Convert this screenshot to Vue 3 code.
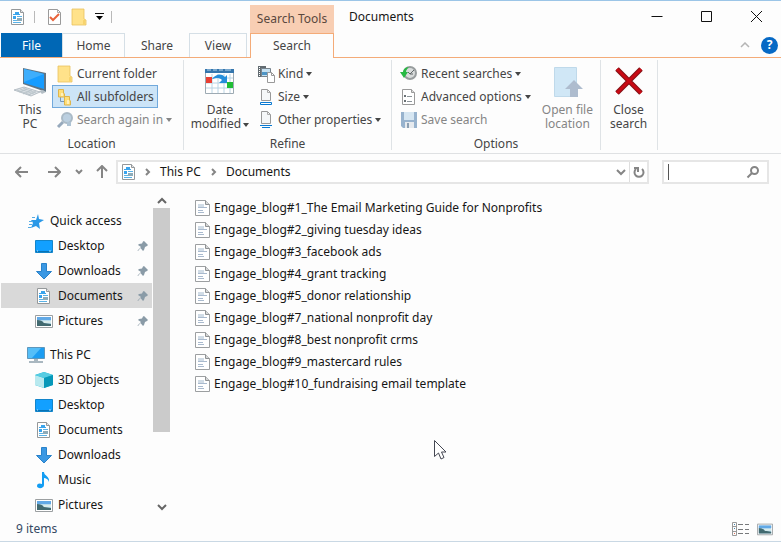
<script setup>
import { ref } from 'vue'

const query = ref('')
const tabs = [
  { name: 'Home', cls: 'home' },
  { name: 'Share', cls: 'share' },
  { name: 'View', cls: 'view' },
  { name: 'Search', cls: 'search' }
]
const tree = [
  {
    name: 'Quick access', icon: 'star', pinned: true,
    items: [
      { name: 'Desktop', icon: 'desktop' },
      { name: 'Downloads', icon: 'download' },
      { name: 'Documents', icon: 'document', selected: true },
      { name: 'Pictures', icon: 'picture' }
    ]
  },
  {
    name: 'This PC', icon: 'monitor', pinned: false,
    items: [
      { name: '3D Objects', icon: 'cube' },
      { name: 'Desktop', icon: 'desktop' },
      { name: 'Documents', icon: 'document' },
      { name: 'Downloads', icon: 'download' },
      { name: 'Music', icon: 'music' },
      { name: 'Pictures', icon: 'picture' }
    ]
  }
]
const files = [
  'Engage_blog#1_The Email Marketing Guide for Nonprofits',
  'Engage_blog#2_giving tuesday ideas',
  'Engage_blog#3_facebook ads',
  'Engage_blog#4_grant tracking',
  'Engage_blog#5_donor relationship',
  'Engage_blog#7_national nonprofit day',
  'Engage_blog#8_best nonprofit crms',
  'Engage_blog#9_mastercard rules',
  'Engage_blog#10_fundraising email template'
]
</script>

<template>
  <svg class="sprite" aria-hidden="true">
    <symbol id="document" viewBox="0 0 18 18">
      <path d="M2.500 1.500h9l3 3v12h-12z" fill="#fff" stroke="#94989a" />
      <path d="M11.500 1.500v3h3" fill="#e2e4e5" stroke="#94989a" />
      <path d="M6 4h4v2H6zM4 6h7v1H4zM4 8h3v3H4z" fill="#3aa4ec" />
      <path d="M8 8h5v1H8zM4 12h5v1H4zM4 14h8v1H4z" fill="#5ab2e6" />
      <path d="M8 10h5v3H8z" fill="#8dabb8" />
    </symbol>
    <symbol id="check" viewBox="0 0 18 18">
      <path d="M3.500 1.500h9l3 3v12h-12z" fill="#fff" stroke="#9a9a9a" />
      <path d="M12.500 1.500v3h3" fill="none" stroke="#aaa" />
      <path d="m5 9 3 3 6-6" fill="none" stroke="#e8643c" stroke-width="2" />
    </symbol>
    <symbol id="folder" viewBox="0 0 18 18">
      <path d="M2 1h12v10l2 1v5H2z" fill="#ffe28a" />
      <path d="M2 1h12v10l2 1v5H2z" fill="none" stroke="#e9c25d" stroke-width=".8" />
      <path d="M13 12.500 15 11v5l-2 1z" fill="#f7d36c" />
    </symbol>
    <symbol id="subfolders" viewBox="0 0 18 18">
      <path d="M4.500 8v5.500H8" fill="none" stroke="#7898b8" />
      <path d="M2.500 1.500h5V5l1 1v3h-6zM8.500 8.500h5V12l1 1v4h-6z" fill="#ffdf79" stroke="#dfb54c" />
      <path d="M5 5h2v3H5M11 12h2v4h-2" fill="#fff0bb" />
    </symbol>
    <symbol id="search-again" viewBox="0 0 18 18">
      <path d="m7 11-5 5" stroke="#8ca1b6" stroke-width="3" />
      <circle cx="11" cy="7" r="5" fill="#b4cbdd" stroke="#a2b3c1" stroke-width="2" />
      <path d="M11 11h4v4h-4" fill="#a6bdd0" />
    </symbol>
    <symbol id="workstation" viewBox="0 0 34 34">
      <path d="m10 4 23 5v19l-23-8z" fill="#5f7484" />
      <path d="m11 5 20 5v15l-20-6z" fill="#169cff" />
      <path d="m11 5 20 5-20 8z" fill="#3eaefc" />
      <path d="m26 27 4-1 3 2-4 2z" fill="#b4bec5" />
      <path d="m1 26 10-3 16 5-9 4z" fill="#dce1e5" stroke="#a9b4bb" stroke-width=".8" />
      <path d="m4 26 14 5M7 25l14 5M10 24l13 5M6 28l8-3m-4 5 9-4m-4 5 8-4" stroke="#b5c0c7" stroke-width=".8" />
    </symbol>
    <symbol id="calendar" viewBox="0 0 34 34">
      <path d="M2.500 5.500h28v24h-28z" fill="#fff" stroke="#9daab3" />
      <path d="M2 5h29v4H2z" fill="#3576ad" />
      <path d="M4 6h4m2 0h4m2 0h4m2 0h6" stroke="#b9d7ed" />
      <path d="M9 10v19M15 10v19M21 10v19M27 10v19M3 14h27M3 19h27M3 24h27" stroke="#b9d4e4" />
      <path d="M3 13h6v6H3z" fill="#e93f32" />
      <path d="M24 18h6v6h-6z" fill="#20bd35" />
      <path d="M9 15c4-5 9-6 13-2l2-2v8h-8l3-3c-3-3-6-2-10-1z" fill="#258edb" />
    </symbol>
    <symbol id="kind" viewBox="0 0 18 18">
      <path d="M1 1h8v11H1z" fill="#626b71" />
      <path d="M2 2h1v1H2zM2 4h1v1H2zM2 6h1v1H2zM2 8h1v1H2zM2 10h1v1H2z" fill="#fff" />
      <path d="M4.500 3.500h9v8h-9z" fill="#c6e1f1" stroke="#77838c" />
      <path d="M5 7h8v3H5z" fill="#4d95c6" />
      <path d="M10.500 7.500h4l3 3v7h-7z" fill="#fff" stroke="#999" />
      <path d="M14.500 7.500v3h3" fill="none" stroke="#999" />
    </symbol>
    <symbol id="size" viewBox="0 0 18 18">
      <path d="M4.500 1.500h6l3 3v8h-9z" fill="#f5f7f8" stroke="#999" />
      <path d="M10.500 1.500v3h3" fill="none" stroke="#aaa" />
      <path d="M3.500 14.500h11v2h-11z" fill="#fff" stroke="#0879d2" />
    </symbol>
    <symbol id="properties" viewBox="0 0 18 18">
      <path d="M4.500.500h6l3 3v9h-9z" fill="#f5f7f8" stroke="#999" />
      <path d="M10.500.500v3h3" fill="none" stroke="#aaa" />
      <path d="M3 14.500h12M5 16.500h8" stroke="#0879d2" />
    </symbol>
    <symbol id="recent" viewBox="0 0 18 18">
      <circle cx="10" cy="8" r="6" fill="#d8dbdb" stroke="#989d9e" stroke-width="2" />
      <path d="m8 7 2 2 4-4M10 9h3" fill="none" stroke="#606769" />
      <path d="M9 2C5 2 3 5 3 7H0l4 6 4-6H6c0-2 1-3 3-5z" fill="#28b944" />
    </symbol>
    <symbol id="advanced" viewBox="0 0 18 18">
      <path d="M2.500 1.500h9l3 3v12h-12z" fill="#fff" stroke="#9a9a9a" />
      <path d="M11.500 1.500v3h3" fill="#ddd" stroke="#9a9a9a" />
      <path d="M4 7h2v2H4zM4 12h2v2H4z" fill="#6b7276" />
      <path d="M7 8.500h5M7 13.500h5" stroke="#8c9499" />
    </symbol>
    <symbol id="save" viewBox="0 0 18 18">
      <path d="M1 1h16v16H3l-2-2z" fill="#8eabc9" />
      <path d="M4 1h10v8H4z" fill="#d2e4f1" /><path d="M5 11h9v6H5z" fill="#e4e9ed" />
      <path d="M7 12h2v5H7z" fill="#8095aa" />
    </symbol>
    <symbol id="location" viewBox="0 0 34 34">
      <path d="M4.500 3.500h22v29h-22z" fill="#cce5f6" stroke="#b9d6e8" />
      <path d="m24 16 9 9h-5v8h-8v-8h-5z" fill="#a6b5ca" />
    </symbol>
    <symbol id="close-search" viewBox="0 0 34 34">
      <path d="m5 5 24 24M29 5 5 29" stroke="#831116" stroke-width="5" />
      <path d="m5 5 24 24M29 5 5 29" stroke="#c90a14" stroke-width="3" />
    </symbol>
    <symbol id="star" viewBox="0 0 18 18">
      <path d="m11 2 1 5 5 1-5 3 1 6-4-3-5 2 2-5-2-3h5z" fill="#2998e7" />
      <path d="M5 5.500h3M2 9.500h4M2 12.500h3M1 15.500h3" stroke="#54aae3" />
    </symbol>
    <symbol id="desktop" viewBox="0 0 18 18">
      <path d="M.500 3.500h17v12H.500z" fill="#12a0ff" stroke="#1285cb" />
      <path d="M1 14h16v1H1z" fill="#0872b4" /><path d="M2 14h1m11 0h2" stroke="#bfe5fb" />
    </symbol>
    <symbol id="download" viewBox="0 0 18 18">
      <path d="M6.500 1.500h5v8h5L9 17 1.500 9.500h5z" fill="#3b98e3" stroke="#2982ca" />
    </symbol>
    <symbol id="picture" viewBox="0 0 18 18">
      <path d="M.500 3.500h17v12H.500z" fill="#fff" stroke="#9b9fa1" />
      <path d="M2 5h14v9H2z" fill="#b9dcef" /><path d="M2 5h14v3H2z" fill="#62a9e6" />
      <path d="M2 8q5 0 7 3l7 1v2H2z" fill="#426a70" /><path d="M8 9h8v2H9z" fill="#d9eceb" />
    </symbol>
    <symbol id="monitor" viewBox="0 0 18 18">
      <path d="M.500 1.500h17v11H.500z" fill="#1c9df2" stroke="#5d97bc" />
      <path d="M1 2h13L5 12H1z" fill="#55bef8" />
      <path d="M7 13h4v2h5v2H2v-2h5z" fill="#a9b7c0" />
    </symbol>
    <symbol id="cube" viewBox="0 0 18 18">
      <path d="m9 1 9 3v10l-9 3-9-3V4z" fill="#14b8d5" /><path d="m0 4 9 3v10l-9-3z" fill="#b8e9ef" />
      <path d="m0 4 9-3 9 3-9 3z" fill="#57cce2" /><path d="m9 7 9-3v10l-9 3z" fill="#0798b9" />
    </symbol>
    <symbol id="music" viewBox="0 0 18 18">
      <path d="M7 1h2c0 4 6 4 5 10-1-3-3-4-5-4v7c0 4-7 4-7 1 0-3 3-3 5-2z" fill="#139df3" />
    </symbol>
    <symbol id="pin" viewBox="0 0 12 12">
      <path d="m7 1 4 4-1 1-2 1-1 3-1 1-2.500-3L1 11l-.500-.500L4 7 1 5l1-1 3-.500 1-2z" fill="#8a9ba7" />
    </symbol>
    <symbol id="file" viewBox="0 0 16 18">
      <path d="M.500 1.500h10l4 4v11H.500z" fill="#fff" stroke="#9c9fa1" />
      <path d="M10.500 1.500v4h4" fill="#d5d7d8" stroke="#8f9294" />
      <path d="M3 5h6v3H3z" fill="#d1dce6" />
      <path d="M3 8.500h9M3 11.500h5M3 13.500h6" stroke="#a9bace" />
    </symbol>
    <symbol id="details" viewBox="0 0 18 16">
      <path d="M.500 1.500h4v13h-4zM.500 5.500h4M.500 10.500h4" fill="none" stroke="#999" />
      <path d="M6 3.500h5m2 0h4M6 8.500h5m2 0h4M6 12.500h5m2 0h4" stroke="#77797b" />
      <path d="M2 3h1v1H2zM2 7h1v1H2z" fill="#4486af" /><path d="M2 12h1v1H2z" fill="#df7359" />
    </symbol>
  </svg>

  <div class="window">
    <header class="titlebar">
      <div class="quick-tools">
        <svg class="icon"><use href="#document" /></svg>
        <span class="tool-rule"></span>
        <button aria-label="Properties"><svg class="icon"><use href="#check" /></svg></button>
        <button aria-label="New folder"><svg class="icon"><use href="#folder" /></svg></button>
        <button class="customize" aria-label="Customize toolbar"><svg viewBox="0 0 9 8"><path d="M0 .500h9" stroke="#111" /><path d="M1 3h7L4.500 7z" /></svg></button>
        <span class="tool-rule"></span>
      </div>
      <div class="context-title">Search Tools</div>
      <h1>Documents</h1>
      <div class="window-buttons">
        <button aria-label="Minimize"><svg viewBox="0 0 12 12"><path d="M.500 5.500h11" /></svg></button>
        <button aria-label="Maximize"><svg viewBox="0 0 12 12"><path d="M.500.500h10v10H.500z" /></svg></button>
        <button aria-label="Close"><svg viewBox="0 0 12 12"><path d="m0 0 11 11M11 0 0 11" /></svg></button>
      </div>
    </header>

    <nav class="tabs" aria-label="Ribbon">
      <button class="tab file-tab">File</button>
      <button v-for="tab in tabs" :key="tab.name" class="tab" :class="tab.cls">{{ tab.name }}</button>
      <div class="tab-tools">
        <button aria-label="Collapse ribbon"><svg viewBox="0 0 10 6"><path d="m1 5 4-4 4 4" fill="none" stroke="#b5b5b5" stroke-width="1.500" /></svg></button>
        <button class="help" aria-label="Help">?</button>
      </div>
    </nav>

    <section class="ribbon" aria-label="Search commands">
      <div class="group location-group">
        <div class="commands">
          <button class="large"><svg><use href="#workstation" /></svg><span>This<br>PC</span></button>
          <div class="small-list">
            <button><svg class="icon"><use href="#folder" /></svg>Current folder</button>
            <button class="chosen"><svg class="icon"><use href="#subfolders" /></svg>All subfolders</button>
            <button class="muted"><svg class="icon"><use href="#search-again" /></svg>Search again in<i class="arrow"></i></button>
          </div>
        </div>
        <div class="group-name">Location</div>
      </div>
      <div class="group refine-group">
        <div class="commands">
          <button class="large"><svg><use href="#calendar" /></svg><span>Date<br>modified<i class="arrow"></i></span></button>
          <div class="small-list">
            <button><svg class="icon"><use href="#kind" /></svg>Kind<i class="arrow"></i></button>
            <button><svg class="icon"><use href="#size" /></svg>Size<i class="arrow"></i></button>
            <button><svg class="icon"><use href="#properties" /></svg>Other properties<i class="arrow"></i></button>
          </div>
        </div>
        <div class="group-name">Refine</div>
      </div>
      <div class="group options-group">
        <div class="commands">
          <div class="small-list">
            <button><svg class="icon"><use href="#recent" /></svg>Recent searches<i class="arrow"></i></button>
            <button><svg class="icon"><use href="#advanced" /></svg>Advanced options<i class="arrow"></i></button>
            <button class="muted"><svg class="icon"><use href="#save" /></svg>Save search</button>
          </div>
          <button class="large muted"><svg><use href="#location" /></svg><span>Open file<br>location</span></button>
        </div>
        <div class="group-name">Options</div>
      </div>
      <div class="group close-group">
        <button class="large"><svg><use href="#close-search" /></svg><span>Close<br>search</span></button>
      </div>
    </section>

    <div class="navigation">
      <div class="history">
        <button class="back" aria-label="Back"><svg viewBox="0 0 14 14"><path d="M13 7H1m5-5L1 7l5 5" /></svg></button>
        <button aria-label="Forward"><svg viewBox="0 0 14 14"><path d="M1 7h12M8 2l5 5-5 5" /></svg></button>
        <button aria-label="Recent locations"><svg viewBox="0 0 14 14"><path d="m5 5 3 3 3-3" /></svg></button>
        <button aria-label="Up"><svg viewBox="0 0 14 14"><path d="M7 13V1M2 6l5-5 5 5" /></svg></button>
      </div>
      <div class="address">
        <svg class="icon"><use href="#document" /></svg>
        <svg class="crumb" viewBox="0 0 6 8"><path d="m1 1 3 3-3 3" /></svg>
        <a href="#">This PC</a>
        <svg class="crumb" viewBox="0 0 6 8"><path d="m1 1 3 3-3 3" /></svg>
        <a href="#">Documents</a>
        <button class="history-arrow" aria-label="Address history"><svg viewBox="0 0 10 7"><path d="m1 1 4 4 4-4" /></svg></button>
        <button class="refresh" aria-label="Refresh"><svg viewBox="0 0 14 14"><path d="M10 4a4.500 4.500 0 1 1-6 0M2 3h4v4" /></svg></button>
      </div>
      <label class="search-box">
        <span class="caret"></span>
        <input v-model="query" type="text" aria-label="Search Documents">
        <svg viewBox="0 0 14 14"><circle cx="8.500" cy="5.500" r="3.500" /><path d="m6 8-4.500 4.500" /></svg>
      </label>
    </div>

    <div class="browser">
      <aside class="sidebar">
        <nav class="tree" aria-label="Folders">
          <section v-for="section in tree" :key="section.name">
            <a class="tree-row root" href="#"><svg class="icon"><use :href="'#' + section.icon" /></svg>{{ section.name }}</a>
            <a v-for="item in section.items" :key="item.name" class="tree-row" :class="{ selected: item.selected }" href="#">
              <svg class="icon"><use :href="'#' + item.icon" /></svg>{{ item.name }}
              <svg v-if="section.pinned" class="pin"><use href="#pin" /></svg>
            </a>
          </section>
        </nav>
        <div class="scrollbar">
          <button aria-label="Scroll up"><svg viewBox="0 0 10 7"><path d="m1 6 4-4 4 4" /></svg></button>
          <div class="scroll-track"><div class="scroll-thumb"></div></div>
          <button aria-label="Scroll down"><svg viewBox="0 0 10 7"><path d="m1 1 4 4 4-4" /></svg></button>
        </div>
      </aside>
      <main>
        <ul>
          <li v-for="file in files" :key="file"><a href="#"><svg><use href="#file" /></svg>{{ file }}</a></li>
        </ul>
        <svg class="pointer" viewBox="0 0 14 21"><path d="M1.500 1.500v16l4-3.500 2.500 6 3-1.500-2.500-5.500H13z" fill="#fff" stroke="#444752" /></svg>
      </main>
    </div>

    <footer>
      <span>9 items</span>
      <div>
        <button aria-label="Details view"><svg class="details"><use href="#details" /></svg></button>
        <button aria-label="Picture view"><svg class="picture-view"><use href="#picture" /></svg></button>
      </div>
    </footer>
  </div>
</template>

<style>
body { margin: 0; background: #fdfdfd; }
</style>

<style scoped>
* { box-sizing: border-box; }
.sprite { position: absolute; width: 0; height: 0; }
.window { display: flex; flex-direction: column; min-height: 100vh; border-top: 1px solid #9bc5e7; border-bottom: 1px solid #c9d8e4; background: #fdfdfd; color: #161616; font: 12px/16px "Noto Sans", "Open Sans", sans-serif; }
button { border: 0; padding: 0; background: transparent; color: inherit; font: inherit; }
button, a { cursor: default; }
a { color: inherit; text-decoration: none; }
svg { display: block; flex: none; }
.icon { width: 18px; height: 18px; }
.titlebar { display: flex; height: 32px; align-items: center; }
.quick-tools { display: flex; flex: 0 0 250px; align-items: center; padding-left: 9px; }
.tool-rule { width: 1px; height: 12px; margin-left: 7px; background: #b9b9b9; }
.quick-tools button { margin-left: 10px; }
.quick-tools button + button { margin-left: 7px; }
.customize svg { width: 9px; height: 8px; }
.context-title { display: flex; flex: 0 0 84px; align-self: flex-end; align-items: center; justify-content: center; height: 28px; background: #f8ceb3; color: #5a483e; }
h1 { margin: 0 0 0 15px; font: inherit; }
.window-buttons { display: flex; gap: 38px; margin-left: auto; padding-right: 18px; }
.window-buttons svg { width: 12px; height: 12px; fill: none; stroke: #111; }
.tabs { display: flex; height: 25px; border-bottom: 1px solid #f4ab78; padding-left: 1px; }
.tab { height: 24px; border: 1px solid transparent; border-bottom: 0; color: #454545; }
.file-tab { width: 61px; background: #0067b5; color: #fff; }
.home { width: 63px; border-color: #d5dfe6; }
.share { width: 64px; }
.view { width: 58px; margin-right: 3px; border-color: #d5dfe6; }
.search { width: 84px; height: 25px; border-color: #f4ab78; background: #fdfdfd; }
.tab-tools { display: flex; align-items: center; gap: 11px; margin-left: auto; padding-right: 3px; }
.tab-tools svg { width: 10px; height: 6px; }
.help { width: 17px; height: 17px; border-radius: 50%; background: #0669c5; color: #fff; font-weight: 700; }
.ribbon { display: flex; height: 96px; padding-top: 2px; border-bottom: 1px solid #dfe1e3; color: #454545; }
.group { display: flex; flex-direction: column; height: 90px; border-right: 1px solid #dfe3e6; }
.location-group { width: 184px; }
.location-group .commands { padding-left: 8px; }
.refine-group { width: 208px; }
.refine-group .commands { padding-left: 3px; }
.options-group { width: 209px; }
.options-group .commands { padding-left: 4px; }
.close-group { width: 57px; }
.commands { display: flex; flex: 1; }
.large { display: flex; flex-direction: column; align-items: center; width: 44px; height: 70px; padding-top: 4px; line-height: 14px; white-space: nowrap; }
.large svg { width: 34px; height: 34px; margin-bottom: 5px; }
.refine-group .large, .options-group .large { width: 66px; }
.close-group .large { width: 55px; }
.small-list { padding-top: 2px; }
.small-list button { display: flex; align-items: center; gap: 3px; height: 23px; padding: 0 3px; border: 1px solid transparent; white-space: nowrap; }
.small-list .chosen { border-color: #71a9dc; background: #cce4f7; }
.muted { color: #858585; }
.muted svg { opacity: .9; }
.arrow { display: inline-block; margin-left: 2px; border-top: 4px solid currentColor; border-right: 3px solid transparent; border-left: 3px solid transparent; vertical-align: middle; }
.small-list .arrow { margin-left: 0; }
.group-name { text-align: center; line-height: 12px; }
.navigation { display: flex; align-items: center; height: 36px; }
.history { display: flex; flex: 0 0 116px; align-items: center; gap: 10px; padding-left: 15px; }
.back { margin-right: 8px; }
.history svg { width: 14px; height: 14px; }
.history svg, .crumb, .address button svg, .search-box svg, .scrollbar svg { stroke: #858585; stroke-width: 2; fill: none; }
.address { display: flex; flex: 1; align-items: center; height: 24px; padding-left: 2px; border: 2px solid #e6e6e6; background: #fff; }
.address a { padding-right: 3px; }
.crumb { width: 6px; height: 8px; margin: 0 9px 0 7px; }
.history-arrow { margin-left: auto; padding-right: 3px; }
.history-arrow svg { width: 10px; height: 7px; }
.refresh { height: 20px; padding: 0 1px 0 2px; border-left: 1px solid #dedede; }
.refresh svg { width: 14px; height: 14px; }
.search-box { display: flex; flex: 0 0 107px; align-items: center; height: 24px; margin: 0 12px 0 13px; padding: 0 7px 0 4px; border: 2px solid #e6e6e6; background: #fff; }
.caret { width: 1px; height: 16px; background: #555; }
.search-box input { flex: 1; min-width: 0; width: 0; border: 0; outline: 0; background: transparent; font: inherit; }
.search-box svg { width: 14px; height: 14px; }
.browser { display: flex; flex: 1; }
.sidebar { display: flex; flex: 0 0 170px; height: 327px; padding-top: 2px; }
.tree { flex: 1; padding: 16px 1px 0 1px; }
.tree section + section { margin-top: 9px; }
.tree-row { display: flex; align-items: center; gap: 5px; height: 25px; padding: 0 3px 0 34px; white-space: nowrap; }
.tree-row.root { padding-left: 26px; }
.selected { background: #d9d9d9; }
.pin { width: 12px; height: 12px; margin-left: auto; }
.scrollbar { display: flex; flex-direction: column; width: 17px; padding-bottom: 2px; }
.scrollbar button { display: flex; align-items: center; justify-content: center; height: 16px; }
.scrollbar button svg { width: 10px; height: 7px; stroke: #666; }
.scroll-track { flex: 1; }
.scroll-thumb { height: 77%; background: #cbcbcb; }
main { position: relative; flex: 1; padding: 7px 0 0 25px; }
ul { margin: 0; padding: 0; list-style: none; }
li a { display: flex; align-items: center; gap: 3px; height: 22px; white-space: nowrap; }
li svg { width: 16px; height: 18px; }
.pointer { position: absolute; top: 249px; left: 263px; width: 14px; height: 21px; }
footer { display: flex; align-items: center; justify-content: space-between; height: 24px; padding: 0 8px 0 16px; color: #354963; }
footer div { display: flex; align-items: center; gap: 7px; }
.details { width: 18px; height: 16px; }
.picture-view { width: 16px; height: 16px; }
</style>
